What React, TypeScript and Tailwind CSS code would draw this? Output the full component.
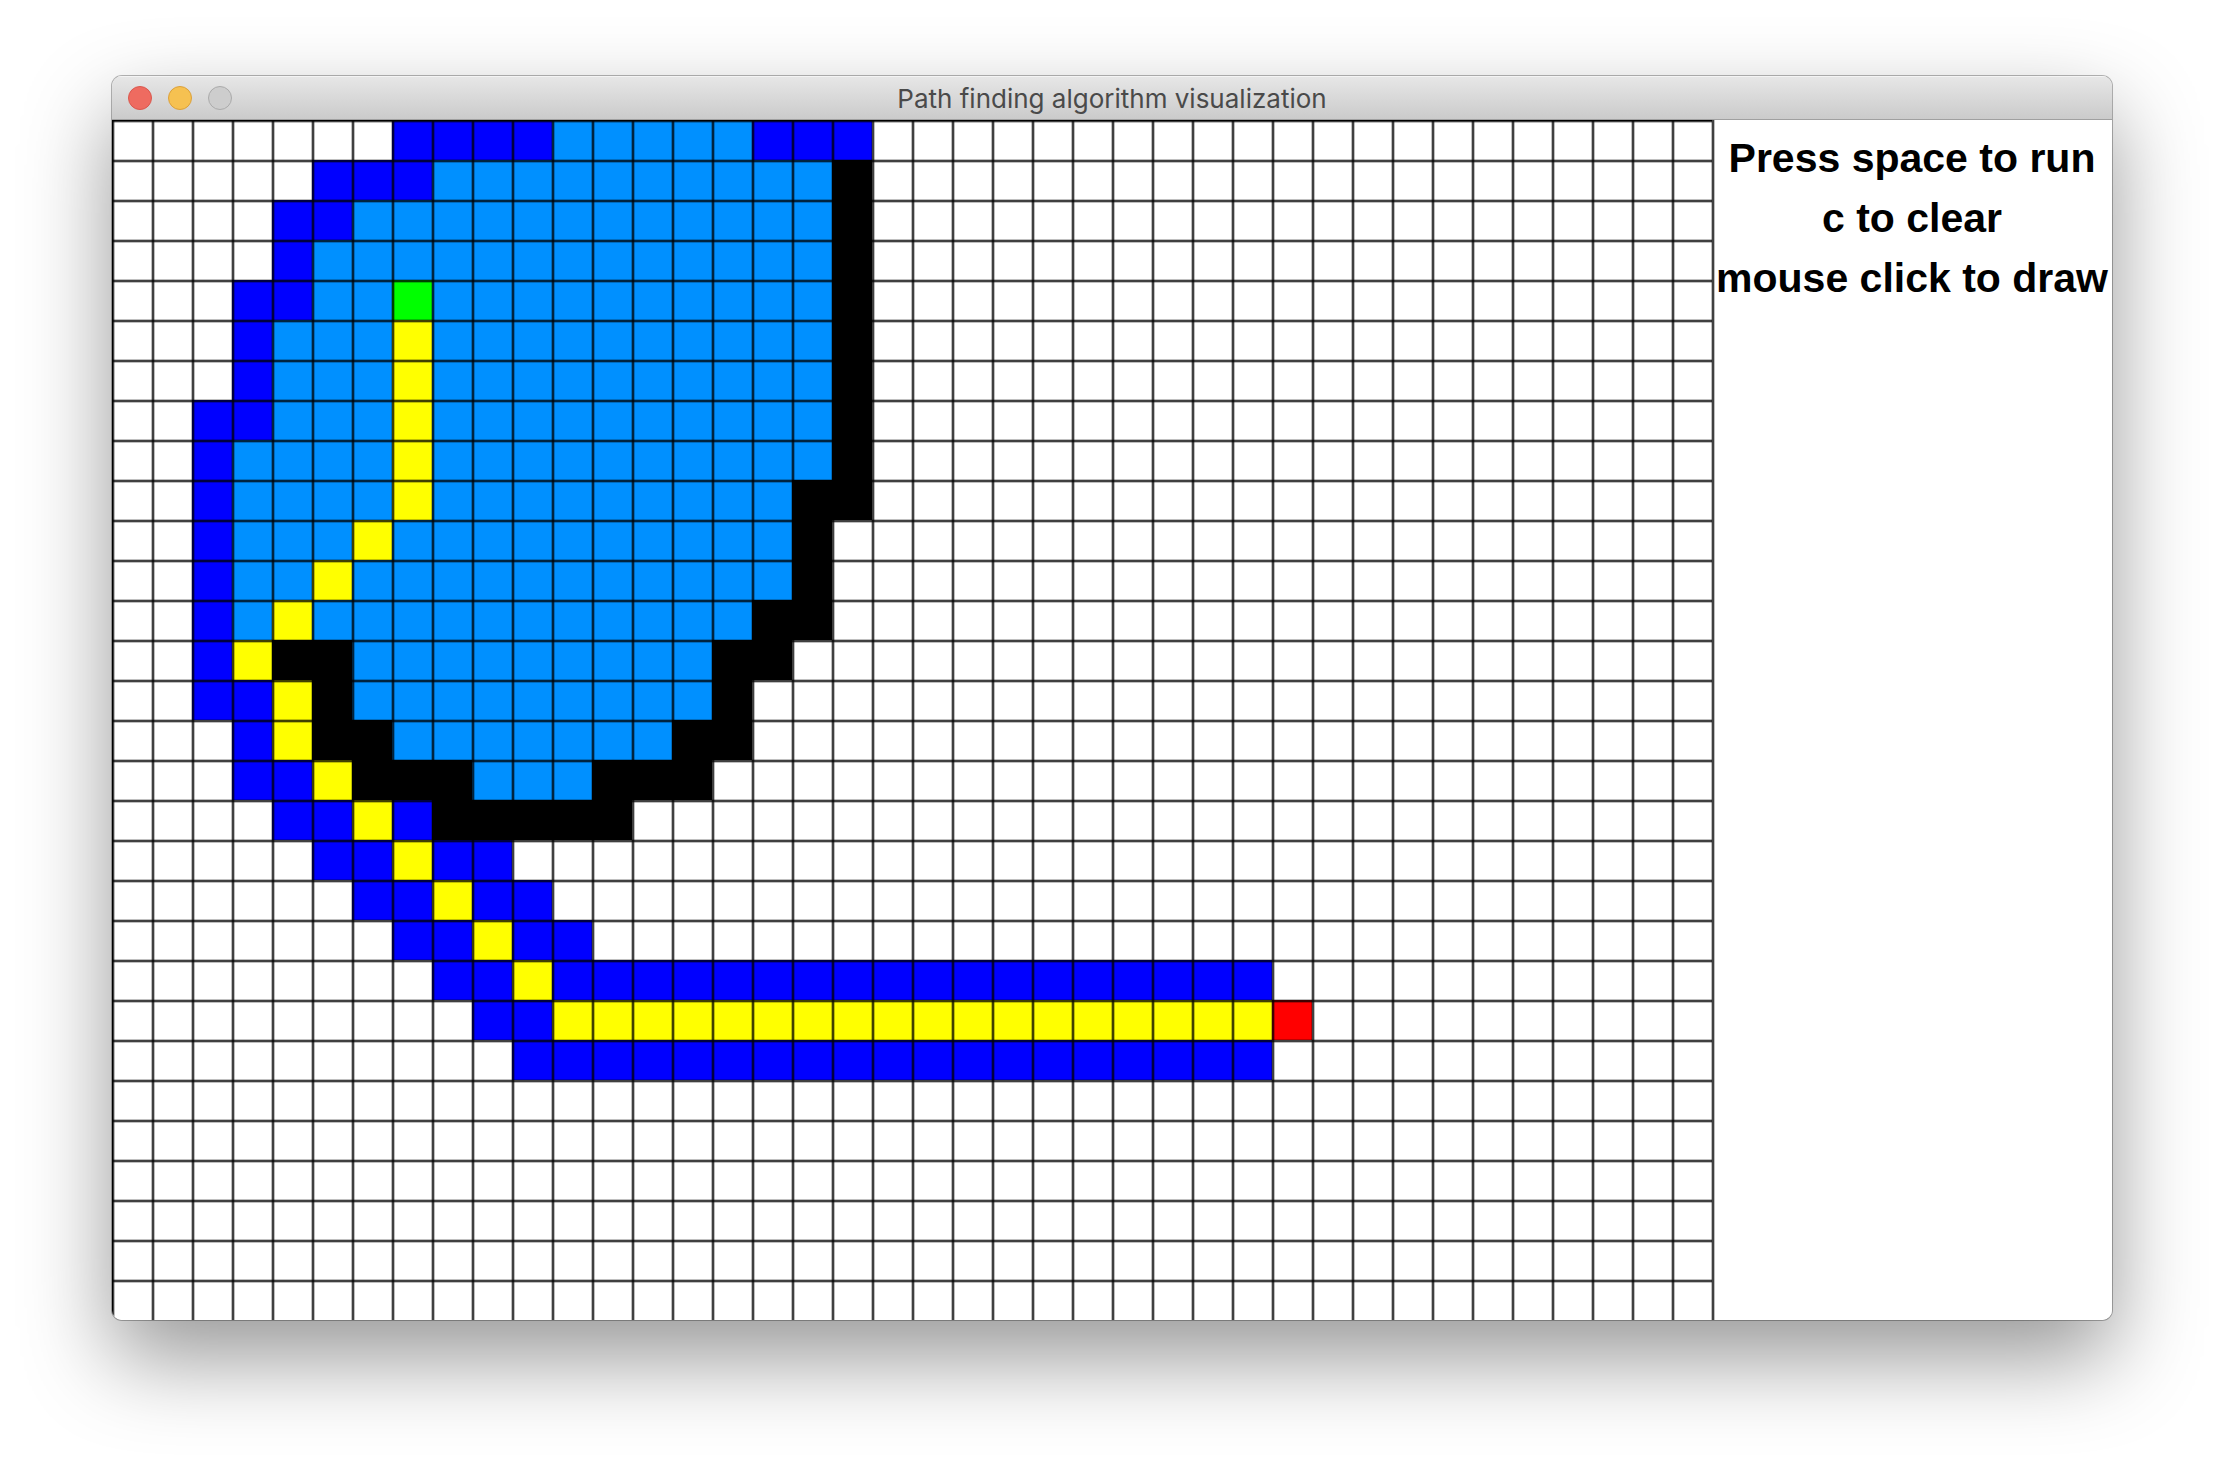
const COLS = 40;
const ROWS = 30;

type Kind = "." | "B" | "L" | "K" | "Y" | "G" | "R";

const FILL: Record<Kind, string> = {
  ".": "bg-white",
  B: "bg-[#0000ff]",
  L: "bg-[#0090ff]",
  K: "bg-black",
  Y: "bg-[#ffff00]",
  G: "bg-[#00ff00]",
  R: "bg-[#ff0000]",
};

// B frontier, L explored, K wall, Y path, G start, R goal
const MAP = [
  ".......BBBBLLLLLBBB",
  ".....BBBLLLLLLLLLLK",
  "....BBLLLLLLLLLLLLK",
  "....BLLLLLLLLLLLLLK",
  "...BBLLGLLLLLLLLLLK",
  "...BLLLYLLLLLLLLLLK",
  "...BLLLYLLLLLLLLLLK",
  "..BBLLLYLLLLLLLLLLK",
  "..BLLLLYLLLLLLLLLLK",
  "..BLLLLYLLLLLLLLLKK",
  "..BLLLYLLLLLLLLLLK",
  "..BLLYLLLLLLLLLLLK",
  "..BLYLLLLLLLLLLLKK",
  "..BYKKLLLLLLLLLKK",
  "..BBYKLLLLLLLLLK",
  "...BYKKLLLLLLLKK",
  "...BBYKKKLLLKKK",
  "....BBYBKKKKK",
  ".....BBYBB",
  "......BBYBB",
  ".......BBYBB",
  "........BBYBBBBBBBBBBBBBBBBBB",
  ".........BBYYYYYYYYYYYYYYYYYYR",
  "..........BBBBBBBBBBBBBBBBBBB",
];

const CELLS: Kind[] = Array.from({ length: ROWS * COLS }, (_, i) => {
  const row = MAP[Math.floor(i / COLS)] ?? "";
  return (row[i % COLS] ?? ".") as Kind;
});

const LINES =
  "bg-[linear-gradient(to_right,#000000bf_2px,#00000040_2px,#00000040_3px,transparent_3px,transparent_calc(100%_-_1px),#00000040_calc(100%_-_1px)),linear-gradient(to_bottom,#000000bf_2px,#00000040_2px,#00000040_3px,transparent_3px,transparent_calc(100%_-_1px),#00000040_calc(100%_-_1px))]";
const LINES_LAST_ROW =
  "bg-[linear-gradient(to_right,#000000bf_2px,#00000040_2px,#00000040_3px,transparent_3px,transparent_calc(100%_-_1px),#00000040_calc(100%_-_1px)),linear-gradient(to_bottom,#000000bf_2px,#00000040_2px,#00000040_3px,transparent_3px)]";

function edgeShadow(i: number) {
  if (i === 0) return "shadow-[inset_1px_1px_0_#000000]";
  if (i < COLS) return "shadow-[inset_0_1px_0_#000000]";
  if (i % COLS === 0) return "shadow-[inset_1px_0_0_#000000]";
  return "";
}

function TitleBar() {
  return (
    <header className="grid h-11 grid-cols-[1fr_auto_1fr] items-center border-b border-[#a0a0a0] bg-linear-to-b from-[#e7e7e7] to-[#cbcbcb] px-4 shadow-[inset_0_1px_0_#f4f4f4]">
      <div className="flex gap-4">
        <button type="button" aria-label="Close" className="size-6 rounded-full border border-[#d9584e] bg-[#ee6b60]" />
        <button type="button" aria-label="Minimize" className="size-6 rounded-full border border-[#dba03b] bg-[#f6c151]" />
        <button type="button" aria-label="Zoom" disabled className="size-6 rounded-full border border-[#aaaaaa] bg-[#cdcdcd]" />
      </div>
      <h1 className="pt-0.5 font-['Inter',sans-serif] text-[26px] leading-8 text-[#4a4a4a]">
        Path finding algorithm visualization
      </h1>
    </header>
  );
}

function Board() {
  return (
    <div
      role="img"
      aria-label="Path finding grid"
      className="grid w-4/5 shrink-0 grid-cols-[repeat(40,minmax(0,1fr))]"
    >
      {CELLS.map((kind, i) => (
        <div
          key={i}
          className={`aspect-square ${FILL[kind]} ${i >= COLS * (ROWS - 1) ? LINES_LAST_ROW : LINES} ${edgeShadow(i)}`}
        />
      ))}
    </div>
  );
}

function Instructions() {
  return (
    <aside className="min-w-0 flex-1 bg-white bg-[linear-gradient(to_right,#000000bf_2px,#00000040_2px,#00000040_3px,transparent_3px)] pt-2 text-center font-['Liberation_Sans',Arial,sans-serif] text-[41px] leading-[60px] font-bold whitespace-nowrap text-black">
      <p>Press space to run</p>
      <p>c to clear</p>
      <p>mouse click to draw</p>
    </aside>
  );
}

export default function App() {
  return (
    <div className="min-h-screen bg-white px-28 pt-19">
      <main className="overflow-hidden rounded-[10px] shadow-[0_0_0_1px_#00000048,0_38px_88px_#00000069]">
        <TitleBar />
        <div className="flex">
          <Board />
          <Instructions />
        </div>
      </main>
    </div>
  );
}
